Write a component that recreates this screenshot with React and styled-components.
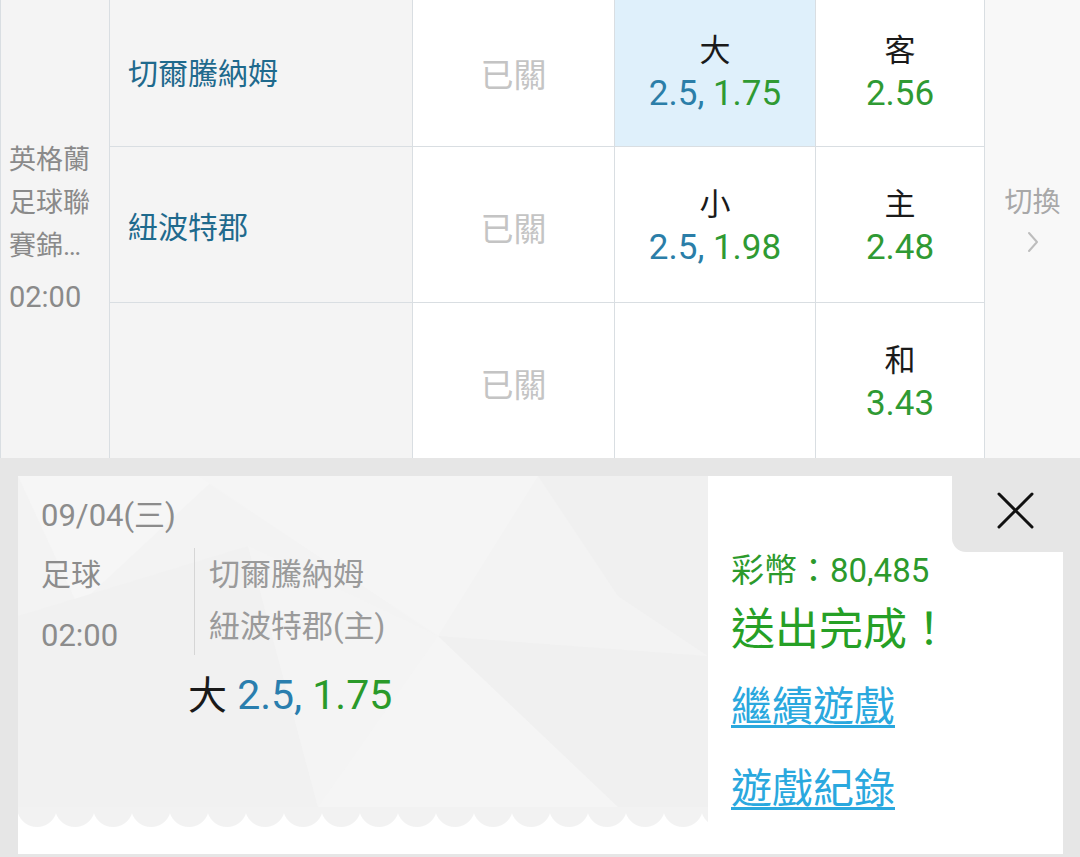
import React from 'react';
import styled, { createGlobalStyle } from 'styled-components';

const Global = createGlobalStyle`
  html, body { margin: 0; padding: 0; background: #e6e6e6; }
  body { font-family: Roboto, "Noto Sans CJK TC", sans-serif; }
  * { box-sizing: border-box; }
`;

const Page = styled.div`
  width: 1080px;
  height: 857px;
  overflow: hidden;
  background: #e6e6e6;
  display: flex;
  flex-direction: column;
`;

/* the list is scrolled: its first row starts a little above the viewport */
const Table = styled.div`
  display: grid;
  grid-template-columns: 108px 302px 201px 200px 168px 1fr;
  grid-template-rows: 151px 155px 155px;
  gap: 1px;
  padding-left: 1px;
  margin-top: -5px;
  background: #d9dee2;
  height: 463px;
  flex: none;
`;

const LeagueCell = styled.div`
  grid-column: 1;
  grid-row: 1 / span 3;
  background: #f4f4f4;
  display: flex;
  flex-direction: column;
  justify-content: center;
  padding: 4px 6px 0 8px;
  color: #8a8a8a;
`;

const LeagueName = styled.div`
  font-size: 27px;
  line-height: 43px;
  max-height: 129px;
  display: -webkit-box;
  -webkit-line-clamp: 3;
  -webkit-box-orient: vertical;
  overflow: hidden;
  word-break: break-all;
`;

const LeagueTime = styled.div`
  font-size: 29px;
  line-height: 43px;
  margin-top: 8px;
`;

const TeamCell = styled.div`
  background: #f4f4f4;
  display: flex;
  align-items: center;
  padding-left: 18px;
  font-size: 30px;
  color: #1f6a8d;
`;

const ClosedCell = styled.div`
  background: #fff;
  display: flex;
  align-items: center;
  justify-content: center;
  padding-top: 5px;
  font-size: 33px;
  color: #c4c4c4;
`;

const OddsCell = styled.div`
  background: ${(p) => (p.$selected ? '#dff0fb' : '#fff')};
  display: flex;
  flex-direction: column;
  align-items: center;
  justify-content: center;
  padding-top: 5px;
`;

const OddsLabel = styled.div`
  font-size: 31px;
  line-height: 42px;
  color: #1a1a1a;
`;

const OddsValue = styled.div`
  font-size: 35px;
  line-height: 44px;
`;

const Blue = styled.span`
  color: ${(p) => p.$c || '#2b7ea8'};
`;

const Green = styled.span`
  color: ${(p) => p.$c || '#2f9a33'};
`;

const SwitchCell = styled.div`
  grid-column: 6;
  grid-row: 1 / span 3;
  background: #f8f8f8;
  display: flex;
  flex-direction: column;
  align-items: center;
  justify-content: center;
  padding-bottom: 18px;
  color: #a8a8a8;
  font-size: 28px;
  line-height: 40px;
`;

const Chevron = styled.svg`
  margin-top: 8px;
  display: block;
`;

const Bottom = styled.div`
  flex: 1;
  padding: 18px 17px 3px 18px;
`;

const Card = styled.div`
  position: relative;
  height: 100%;
  background: #fff;
  display: flex;
`;

const Receipt = styled.div`
  width: 690px;
  flex: none;
  display: flex;
  flex-direction: column;
`;

const ReceiptBody = styled.div`
  position: relative;
  height: 331px;
  background: #f3f3f3;
  overflow: hidden;
`;

const Pattern = styled.svg`
  position: absolute;
  left: 0;
  top: 0;
`;

const ReceiptContent = styled.div`
  position: relative;
  padding: 22px 0 0 23px;
`;

const Scallops = styled.div`
  height: 20px;
  background-image: radial-gradient(circle at 19px 0, #f2f2f2 19.5px, transparent 20.5px);
  background-size: 38px 20px;
  background-repeat: repeat-x;
`;

const DateLine = styled.div`
  font-size: 31px;
  line-height: 36px;
  color: #8c8c8c;
`;

const MatchRow = styled.div`
  display: flex;
  align-items: flex-start;
  margin-top: 14px;
`;

const MetaCol = styled.div`
  width: 153px;
  color: #8c8c8c;
  display: flex;
  flex-direction: column;
  gap: 7px;
`;

const MetaLine = styled.div`
  line-height: 54px;
  font-size: ${(p) => p.$size || 30}px;
`;

const TeamsCol = styled.div`
  border-left: 1px solid #d6d6d6;
  padding: 1px 0 2px 14px;
  color: #9a9a9a;
  font-size: 31px;
  line-height: 52px;
`;

const Pick = styled.div`
  margin: 8px 0 0 147px;
  font-size: 41px;
  line-height: 48px;
  color: #1a1a1a;
`;

const PickLabel = styled.span`
  font-size: 39px;
`;

const Result = styled.div`
  flex: 1;
  padding: 74px 0 0 23px;
  display: flex;
  flex-direction: column;
  align-items: flex-start;
`;

const Balance = styled.div`
  font-size: 33px;
  line-height: 42px;
  color: #2c9a2c;
`;

const Success = styled.div`
  margin-top: 9px;
  font-size: 44px;
  line-height: 58px;
  color: #26a026;
`;

const LinkText = styled.a`
  margin-top: ${(p) => p.$mt}px;
  font-size: 41px;
  line-height: 52px;
  color: #2aa8de;
  text-decoration: underline;
  text-decoration-thickness: 3px;
  text-underline-offset: 4px;
  cursor: pointer;
`;

const CloseTab = styled.button`
  position: absolute;
  top: 0;
  right: 0;
  width: 111px;
  height: 76px;
  border: none;
  margin: 0;
  background: #e6e6e6;
  border-bottom-left-radius: 14px;
  display: flex;
  justify-content: flex-end;
  align-items: flex-start;
  padding: 16px 29px 0 0;
  cursor: pointer;
`;

const Odds = ({ label, line, price, selected }) => (
  <OddsCell $selected={selected}>
    <OddsLabel>{label}</OddsLabel>
    <OddsValue>
      {line && <Blue>{line}, </Blue>}
      <Green>{price}</Green>
    </OddsValue>
  </OddsCell>
);

export default function App() {
  return (
    <Page>
      <Global />
      <Table>
        <LeagueCell>
          <LeagueName>英格蘭足球聯賽錦標賽</LeagueName>
          <LeagueTime>02:00</LeagueTime>
        </LeagueCell>
        <TeamCell>切爾騰納姆</TeamCell>
        <ClosedCell>已關</ClosedCell>
        <Odds label="大" line="2.5" price="1.75" selected />
        <Odds label="客" price="2.56" />
        <SwitchCell>
          <div>切換</div>
          <Chevron width="12" height="22" viewBox="0 0 12 22">
            <path d="M2 2 L10 11 L2 20" fill="none" stroke="#bdbdbd" strokeWidth="2" strokeLinecap="round" strokeLinejoin="round" />
          </Chevron>
        </SwitchCell>
        <TeamCell>紐波特郡</TeamCell>
        <ClosedCell>已關</ClosedCell>
        <Odds label="小" line="2.5" price="1.98" />
        <Odds label="主" price="2.48" />
        <TeamCell />
        <ClosedCell>已關</ClosedCell>
        <OddsCell />
        <Odds label="和" price="3.43" />
      </Table>
      <Bottom>
        <Card>
          <Receipt>
            <ReceiptBody>
              <Pattern width="690" height="331" viewBox="0 0 690 331">
                <polygon points="0,0 200,0 60,130" fill="#f6f6f6" />
                <polygon points="180,0 520,0 420,160" fill="#f5f5f5" />
                <polygon points="520,0 690,0 690,180 600,120" fill="#f0f0f0" />
                <polygon points="0,140 230,70 300,331 0,331" fill="#f1f1f1" />
                <polygon points="300,331 420,160 600,331" fill="#f5f5f5" />
                <polygon points="420,160 690,180 690,331 600,331" fill="#f0f0f0" />
                <polygon points="230,70 420,160 300,331" fill="#f4f4f4" />
              </Pattern>
              <ReceiptContent>
                <DateLine>09/04(三)</DateLine>
                <MatchRow>
                  <MetaCol>
                    <MetaLine>足球</MetaLine>
                    <MetaLine $size={31}>02:00</MetaLine>
                  </MetaCol>
                  <TeamsCol>
                    <div>切爾騰納姆</div>
                    <div>紐波特郡(主)</div>
                  </TeamsCol>
                </MatchRow>
                <Pick>
                  <PickLabel>大</PickLabel> <Blue $c="#2a7eae">2.5,</Blue> <Green $c="#2a9a2a">1.75</Green>
                </Pick>
              </ReceiptContent>
            </ReceiptBody>
            <Scallops />
          </Receipt>
          <Result>
            <Balance>彩幣：80,485</Balance>
            <Success>送出完成！</Success>
            <LinkText $mt={22}>繼續遊戲</LinkText>
            <LinkText $mt={30}>遊戲紀錄</LinkText>
          </Result>
          <CloseTab aria-label="close">
            <svg width="37" height="37" viewBox="0 0 37 37">
              <path d="M2 2 L35 35 M35 2 L2 35" stroke="#111" strokeWidth="3" strokeLinecap="round" />
            </svg>
          </CloseTab>
        </Card>
      </Bottom>
    </Page>
  );
}
